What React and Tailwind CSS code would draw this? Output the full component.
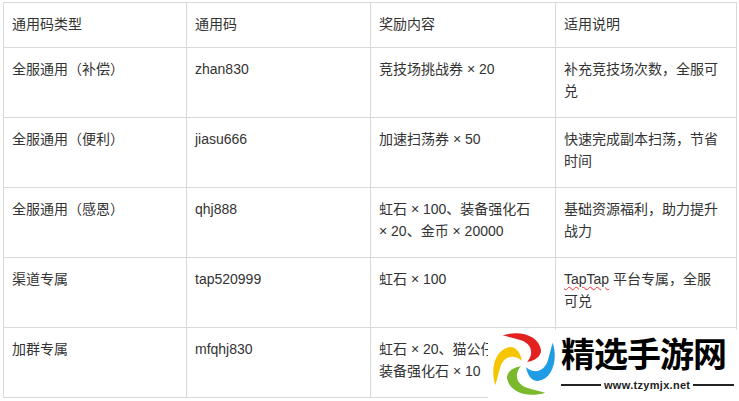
const rows = [
  { type: '全服通用（补偿）', code: 'zhan830', reward: ['竞技场挑战券 × 20'], note: ['补充竞技场次数，全服可', '兑'] },
  { type: '全服通用（便利）', code: 'jiasu666', reward: ['加速扫荡券 × 50'], note: ['快速完成副本扫荡，节省', '时间'] },
  { type: '全服通用（感恩）', code: 'qhj888', reward: ['虹石 × 100、装备强化石', '× 20、金币 × 20000'], note: ['基础资源福利，助力提升', '战力'] },
  { type: '渠道专属', code: 'tap520999', reward: ['虹石 × 100'], note: 'tap' },
  { type: '加群专属', code: 'mfqhj830', reward: ['虹石 × 20、猫公仔 × 5、', '装备强化石 × 10'], note: [] },
]

const Blade = ({ color, rot }) => (
  <path
    d="M10 4 C26 -1 44 4 46 18 C46 24 40 28 33 29 C39 22 38 13 28 9 C22 7 16 6 10 4 Z"
    fill={color}
    transform={`rotate(${rot} 30 31)`}
  />
)

const Logo = () => (
  <div className="absolute left-[488px] top-[330px] w-[251px] h-[71px] bg-white flex items-start">
    <svg width="64" height="66" viewBox="0 0 60 62" className="ml-[4px] mt-[1px]">
      <Blade color="#e3211f" rot={0} />
      <Blade color="#1f9ce3" rot={90} />
      <Blade color="#7ab82c" rot={180} />
      <Blade color="#f6c500" rot={270} />
    </svg>
    <div className="flex flex-col ml-[5px]">
      <div className="text-[34px] leading-[40px] font-bold text-black tracking-[-1px] mt-[3px]" style={{ fontFamily: '"Noto Sans CJK SC", sans-serif' }}>
        精选手游网
      </div>
      <div className="flex items-center gap-[3px] mt-[6px]">
        <div className="w-[40px] h-[2px] bg-[#222]" />
        <span className="text-[11px] leading-[12px] font-bold text-[#222] tracking-[0.3px]" style={{ fontFamily: '"Liberation Sans", sans-serif' }}>www.tzymjx.net</span>
        <div className="w-[41px] h-[2px] bg-[#222]" />
      </div>
    </div>
  </div>
)

const Lines = ({ lines }) => lines.map((l, i) => (
  <div key={i} className="whitespace-nowrap">{l}</div>
))

const Cell = ({ children }) => (
  <td className="border border-[#d9d9d9] align-top px-2 pt-[10px] text-[14px] leading-[22px] text-[#333]">
    {children}
  </td>
)

export default function App() {
  return (
    <div className="relative w-[739px] h-[401px] overflow-hidden bg-white" style={{ fontFamily: '"Liberation Sans", "Noto Sans CJK SC", sans-serif' }}>
      <table className="border-collapse ml-[3px] mt-[2px] table-fixed w-[733px]">
        <colgroup>
          <col className="w-[183px]" />
          <col className="w-[184px]" />
          <col className="w-[185px]" />
          <col className="w-[181px]" />
        </colgroup>
        <thead>
          <tr className="h-[45px]">
            {['通用码类型', '通用码', '奖励内容', '适用说明'].map((h) => (
              <td key={h} className="border border-[#d9d9d9] align-top px-2 pt-[10px] text-[14px] leading-[22px] text-[#333]">{h}</td>
            ))}
          </tr>
        </thead>
        <tbody>
          {rows.map((r) => (
            <tr key={r.code} className="h-[70px]">
              <Cell>{r.type}</Cell>
              <Cell>{r.code}</Cell>
              <Cell><Lines lines={r.reward} /></Cell>
              <Cell>
                {r.note === 'tap' ? (
                  <>
                    <div className="whitespace-nowrap">
                      <span className="underline decoration-wavy decoration-red-500 decoration-1 underline-offset-2">TapTap</span> 平台专属，全服
                    </div>
                    <div>可兑</div>
                  </>
                ) : <Lines lines={r.note} />}
              </Cell>
            </tr>
          ))}
        </tbody>
      </table>
      <Logo />
    </div>
  )
}
